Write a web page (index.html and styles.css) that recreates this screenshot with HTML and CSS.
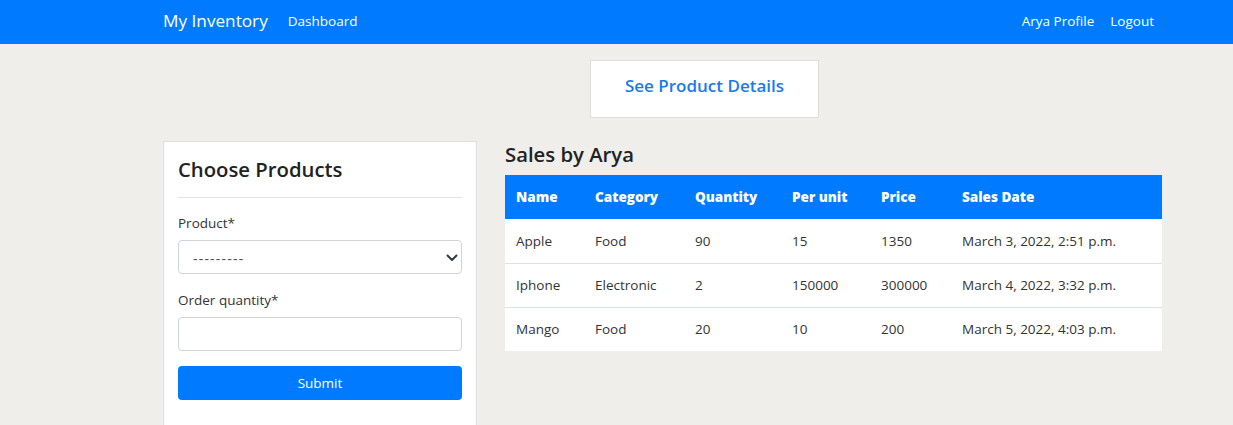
FILE: index.html
```html
<!DOCTYPE html>
<html lang="en">
<head>
<meta charset="utf-8">
<title>My Inventory</title>
<link rel="stylesheet" href="styles.css">
</head>
<body>
<nav class="navbar">
  <div class="nav-inner">
    <div class="nav-left">
      <a class="brand" href="#">My Inventory</a>
      <a class="nav-link" href="#">Dashboard</a>
    </div>
    <div class="nav-right">
      <a class="nav-link" href="#">Arya Profile</a>
      <a class="nav-link" href="#">Logout</a>
    </div>
  </div>
</nav>
<main class="container">
  <div class="details-row">
    <a class="details-box" href="#">See Product Details</a>
  </div>
  <div class="main-row">
    <section class="card">
      <h4 class="card-title">Choose Products</h4>
      <hr class="divider">
      <form class="form">
        <label class="label">Product*</label>
        <div class="select-wrap">
          <select class="control select">
            <option>---------</option>
          </select>
          <svg class="chevron" width="12" height="8" viewBox="0 0 12 8"><path d="M1.5 1.5 L6 6 L10.5 1.5" fill="none" stroke="#343a40" stroke-width="2" stroke-linecap="round" stroke-linejoin="round"/></svg>
        </div>
        <label class="label label-second">Order quantity*</label>
        <input class="control" type="text">
        <button class="btn" type="button">Submit</button>
      </form>
    </section>
    <section class="sales">
      <h4 class="sales-title">Sales by Arya</h4>
      <table class="table">
        <colgroup>
          <col class="c1"><col class="c2"><col class="c3"><col class="c4"><col class="c5"><col class="c6">
        </colgroup>
        <thead>
          <tr><th>Name</th><th>Category</th><th>Quantity</th><th>Per unit</th><th>Price</th><th>Sales Date</th></tr>
        </thead>
        <tbody>
          <tr><td>Apple</td><td>Food</td><td>90</td><td>15</td><td>1350</td><td>March 3, 2022, 2:51 p.m.</td></tr>
          <tr><td>Iphone</td><td>Electronic</td><td>2</td><td>150000</td><td>300000</td><td>March 4, 2022, 3:32 p.m.</td></tr>
          <tr><td>Mango</td><td>Food</td><td>20</td><td>10</td><td>200</td><td>March 5, 2022, 4:03 p.m.</td></tr>
        </tbody>
      </table>
    </section>
  </div>
</main>
</body>
</html>
```
FILE: styles.css
```css
* { box-sizing: border-box; }
html, body { margin: 0; padding: 0; }
body {
  background: #efeeea;
  font-family: "Open Sans", "Noto Sans", sans-serif;
  font-size: 14px;
  color: #212529;
  overflow: hidden;
}
a { text-decoration: none; }

.navbar {
  background: #007bff;
  height: 44px;
}
.nav-inner {
  margin-left: 163px;
  width: 999px;
  height: 44px;
  padding-bottom: 3px;
  display: flex;
  align-items: center;
  justify-content: space-between;
}
.nav-left, .nav-right { display: flex; align-items: center; }
.brand {
  color: #fff;
  font-size: 17.2px;
  margin-right: 20px;
  line-height: 28px;
}
.nav-link {
  color: #fff;
  font-size: 13.5px;
  padding: 0 7px;
  line-height: 20px;
}
.nav-left .nav-link { padding-left: 0; }
.nav-right .nav-link:last-child { padding-right: 8px; }
.nav-right .nav-link:first-child { padding-right: 9px; }

.container {
  margin-left: 163px;
  width: 999px;
}
.details-row {
  padding-top: 16px;
  padding-left: 427px;
}
.details-box {
  display: flex;
  align-items: center;
  justify-content: center;
  width: 229px;
  height: 58px;
  padding-bottom: 8px;
  background: #fff;
  border: 1px solid #dedddb;
  color: #1a7be8;
  font-size: 17px;
  font-weight: 600;
}

.main-row {
  display: flex;
  align-items: flex-start;
  gap: 28px;
  margin-top: 23px;
}
.card {
  width: 314px;
  background: #fff;
  border: 1px solid #dfdedc;
  padding: 14px 14px 40px;
}
.card-title {
  margin: 0 0 1px;
  font-size: 20.3px;
  font-weight: 600;
  line-height: 27px;
  color: #222;
}
.divider {
  border: 0;
  border-top: 1px solid #e3e3e3;
  margin: 14px 0 15px;
}
.form { display: flex; flex-direction: column; }
.label {
  font-size: 13.5px;
  line-height: 20px;
  color: #333;
  margin-bottom: 7px;
}
.label-second { margin-top: 16px; }
.select-wrap { position: relative; }
.control {
  width: 100%;
  height: 34px;
  border: 1px solid #ced4da;
  border-radius: 4px;
  background: #fff;
  font-family: inherit;
  font-size: 14px;
  color: #495057;
  padding: 0 14px;
  outline: none;
}
.select {
  -webkit-appearance: none;
  appearance: none;
  letter-spacing: 1.2px;
  padding-top: 2px;
}
.chevron {
  position: absolute;
  right: 4px;
  top: 14px;
}
.btn {
  margin-top: 15px;
  height: 34px;
  border: 0;
  border-radius: 4px;
  background: #007bff;
  color: #fff;
  font-family: inherit;
  font-size: 13.5px;
}

.sales { width: 657px; }
.sales-title {
  margin: 0 0 7px;
  font-size: 20.3px;
  font-weight: 600;
  line-height: 27px;
  color: #222;
}
.table {
  width: 657px;
  border-collapse: collapse;
  table-layout: fixed;
  background: #fff;
}
.c1 { width: 79px; }
.c2 { width: 100px; }
.c3 { width: 97px; }
.c4 { width: 89px; }
.c5 { width: 81px; }
.c6 { width: 211px; }
.table th {
  background: #007bff;
  color: #fff;
  font-weight: 800;
  font-size: 13.5px;
  text-align: left;
  height: 44px;
  padding: 0 11px;
}
.table td {
  height: 44px;
  padding: 0 11px;
  font-size: 13.5px;
  color: #333;
  border-top: 1px solid #dee2e6;
  white-space: nowrap;
}
.table tbody tr:first-child td { border-top: 0; }
```
